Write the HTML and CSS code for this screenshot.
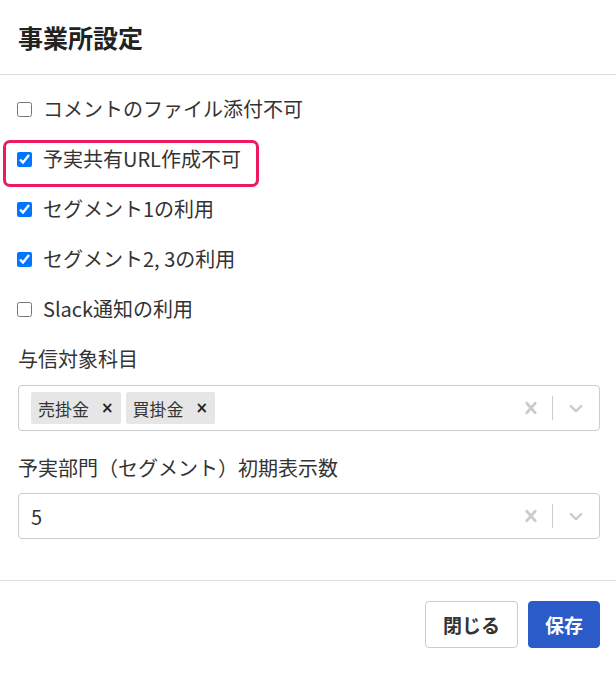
FILE: index.html
```html
<!DOCTYPE html>
<html lang="ja">
<head>
<meta charset="utf-8">
<title>事業所設定</title>
<link rel="stylesheet" href="styles.css">
</head>
<body>
<div class="dialog">
  <header class="dialog-header">
    <h1 class="dialog-title">事業所設定</h1>
  </header>
  <div class="dialog-body">
    <label class="check-row"><input type="checkbox"><span>コメントのファイル添付不可</span></label>
    <label class="check-row is-marked"><input type="checkbox" checked><span>予実共有URL作成不可</span></label>
    <label class="check-row"><input type="checkbox" checked><span>セグメント1の利用</span></label>
    <label class="check-row"><input type="checkbox" checked><span>セグメント2, 3の利用</span></label>
    <label class="check-row"><input type="checkbox"><span>Slack通知の利用</span></label>

    <div class="field">
      <div class="field-label">与信対象科目</div>
      <div class="select">
        <div class="select-values">
          <span class="tag"><span class="tag-text">売掛金</span><span class="tag-remove">×</span></span>
          <span class="tag"><span class="tag-text">買掛金</span><span class="tag-remove">×</span></span>
        </div>
        <div class="select-indicators">
          <span class="indicator clear"><svg viewBox="0 0 20 20" width="24" height="24"><path d="M14.348 14.849c-0.469 0.469-1.229 0.469-1.697 0l-2.651-3.030-2.651 3.029c-0.469 0.469-1.229 0.469-1.697 0-0.469-0.469-0.469-1.229 0-1.697l2.758-3.15-2.759-3.152c-0.469-0.469-0.469-1.228 0-1.697s1.228-0.469 1.697 0l2.652 3.031 2.651-3.031c0.469-0.469 1.228-0.469 1.697 0s0.469 1.229 0 1.697l-2.758 3.152 2.758 3.15c0.469 0.469 0.469 1.229 0 1.698z"/></svg></span>
          <span class="separator"></span>
          <span class="indicator"><svg viewBox="0 0 20 20" width="22" height="22"><path d="M4.516 7.548c0.436-0.446 1.043-0.481 1.576 0l3.908 3.747 3.908-3.747c0.533-0.481 1.141-0.446 1.574 0 0.436 0.445 0.408 1.197 0 1.615-0.406 0.418-4.695 4.502-4.695 4.502-0.217 0.223-0.502 0.335-0.787 0.335s-0.57-0.112-0.789-0.335c0 0-4.287-4.084-4.695-4.502s-0.436-1.170 0-1.615z"/></svg></span>
        </div>
      </div>
    </div>

    <div class="field">
      <div class="field-label">予実部門（セグメント）初期表示数</div>
      <div class="select">
        <div class="select-values">
          <span class="single-value">5</span>
        </div>
        <div class="select-indicators">
          <span class="indicator clear"><svg viewBox="0 0 20 20" width="24" height="24"><path d="M14.348 14.849c-0.469 0.469-1.229 0.469-1.697 0l-2.651-3.030-2.651 3.029c-0.469 0.469-1.229 0.469-1.697 0-0.469-0.469-0.469-1.229 0-1.697l2.758-3.15-2.759-3.152c-0.469-0.469-0.469-1.228 0-1.697s1.228-0.469 1.697 0l2.652 3.031 2.651-3.031c0.469-0.469 1.228-0.469 1.697 0s0.469 1.229 0 1.697l-2.758 3.152 2.758 3.15c0.469 0.469 0.469 1.229 0 1.698z"/></svg></span>
          <span class="separator"></span>
          <span class="indicator"><svg viewBox="0 0 20 20" width="22" height="22"><path d="M4.516 7.548c0.436-0.446 1.043-0.481 1.576 0l3.908 3.747 3.908-3.747c0.533-0.481 1.141-0.446 1.574 0 0.436 0.445 0.408 1.197 0 1.615-0.406 0.418-4.695 4.502-4.695 4.502-0.217 0.223-0.502 0.335-0.787 0.335s-0.57-0.112-0.789-0.335c0 0-4.287-4.084-4.695-4.502s-0.436-1.170 0-1.615z"/></svg></span>
        </div>
      </div>
    </div>
  </div>
  <footer class="dialog-footer">
    <button class="btn btn-secondary" type="button">閉じる</button>
    <button class="btn btn-primary" type="button">保存</button>
  </footer>
</div>
</body>
</html>
```

FILE: styles.css
```css
* {
  box-sizing: border-box;
}

html, body {
  margin: 0;
  padding: 0;
  background: #fff;
}

body {
  font-family: "Noto Sans CJK JP", "Noto Sans", sans-serif;
  color: #333;
}

.dialog {
  width: 616px;
}

.dialog-header {
  height: 75px;
  padding: 0 18px;
  display: flex;
  align-items: center;
  border-bottom: 1px solid #dedede;
}

.dialog-title {
  margin: 0;
  font-size: 25px;
  font-weight: 700;
  color: #222;
  line-height: 1;
}

.dialog-body {
  padding: 9px 16px 41px 17px;
  display: flex;
  flex-direction: column;
}

.check-row {
  position: relative;
  height: 50px;
  display: flex;
  align-items: center;
  gap: 11px;
  font-size: 20px;
  line-height: 1;
}

.check-row input {
  margin: 0;
  width: 15px;
  height: 15px;
}

/* highlight frame around the second option */
.is-marked::after {
  content: "";
  position: absolute;
  left: -14px;
  top: 6px;
  width: 250px;
  height: 41px;
  border: 3px solid #ee1a5f;
  border-radius: 7px;
  pointer-events: none;
}

.field {
  display: flex;
  flex-direction: column;
}

.field + .field {
  margin-top: 23px;
}

.field-label {
  font-size: 20px;
  line-height: 28px;
  margin-top: 11px;
  margin-bottom: 12px;
  padding-left: 1px;
}

.field + .field .field-label {
  margin-top: 0;
  margin-bottom: 11px;
}

.select {
  height: 46px;
  border: 1px solid #ccc;
  border-radius: 4px;
  margin-left: 1px;
  display: flex;
  align-items: center;
}

.select-values {
  flex: 1;
  display: flex;
  align-items: center;
  gap: 5px;
  padding-left: 12px;
}

.tag {
  height: 32px;
  background: #e6e6e6;
  border-radius: 2px;
  display: flex;
  align-items: center;
  font-size: 17px;
}

.tag-text {
  padding-left: 7px;
}

.tag-remove {
  padding: 0 7px 0 12px;
  font-family: "DejaVu Sans", sans-serif;
  font-weight: 700;
  font-size: 15px;
  color: #222;
}

.single-value {
  font-size: 20px;
}

.select-indicators {
  display: flex;
  align-items: center;
  padding-right: 8px;
}

.indicator {
  display: flex;
  padding: 0 4px;
}

.indicator.clear {
  padding: 0 3px;
}

.indicator svg {
  fill: #ccc;
}

.separator {
  width: 1px;
  height: 24px;
  background: #ccc;
  margin: 0 8px 0 6px;
}

.dialog-footer {
  border-top: 1px solid #dedede;
  padding: 20px 16px 0 0;
  display: flex;
  justify-content: flex-end;
  gap: 10px;
}

.btn {
  height: 47px;
  border-radius: 4px;
  font-family: "Noto Sans CJK JP", sans-serif;
  font-size: 19px;
  font-weight: 700;
  padding: 0 16px;
  cursor: pointer;
}

.btn-secondary {
  background: #fff;
  border: 1px solid #ccc;
  color: #333;
  padding: 0 17px;
}

.btn-primary {
  background: #2a5bc9;
  border: 1px solid #2a5bc9;
  color: #fff;
}
```
